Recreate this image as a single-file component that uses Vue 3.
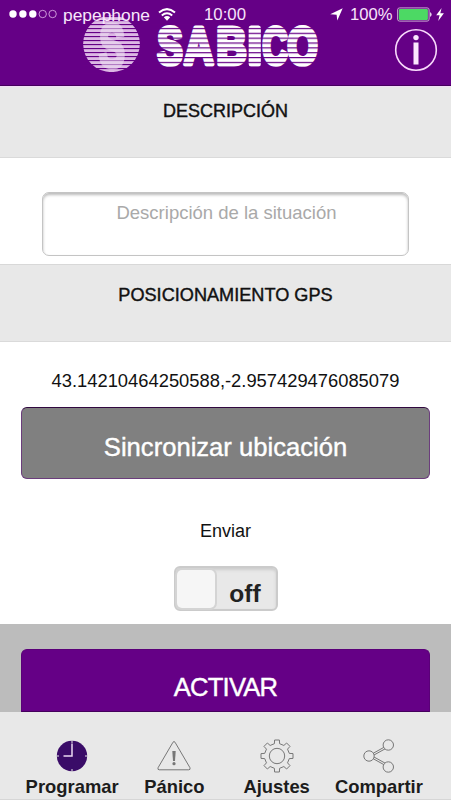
<template>
  <div class="screen">
    <header class="header">
      <div class="status">
        <svg class="dots" width="50" height="12" viewBox="0 0 50 12">
          <circle
            v-for="n in 5"
            :key="n"
            :cx="4 + (n - 1) * 9.9"
            cy="6"
            r="3.7"
            :class="n <= signal ? 'dot-full' : 'dot-empty'"
          />
        </svg>
        <span class="carrier">pepephone</span>
        <svg class="wifi" width="18" height="13" viewBox="0 0 18 13">
          <path d="M1 4.5Q9 -2.3 17 4.5M3.8 7.4Q9 3 14.2 7.4" />
          <path class="wifi-base" d="M5.8 9.3Q9 6.8 12.2 9.3L9 12.7Z" />
        </svg>
        <span class="time">10:00</span>
        <svg class="arrow" width="13" height="13" viewBox="0 0 13 13">
          <path d="M12.7 0.3L7.3 12.5L6.6 6.8L0.2 6.3Z" />
        </svg>
        <span class="percent">100%</span>
        <svg class="battery" width="36" height="15" viewBox="0 0 36 15">
          <rect class="battery-frame" x="0.6" y="0.9" width="31.5" height="13.2" rx="2" />
          <rect class="battery-fill" x="1.8" y="2.1" width="29.1" height="10.8" rx="1" />
          <path class="battery-tip" d="M33.2 5Q36 7.5 33.2 10Z" />
        </svg>
        <svg class="bolt" width="8" height="13" viewBox="0 0 8 13">
          <path d="M5.6 0L0.2 7.2H3.6L2.2 13L7.9 5.3H4.3Z" />
        </svg>
      </div>

      <svg class="logo" width="240" height="60" viewBox="0 0 240 60">
        <defs>
          <pattern id="ballLines" y="1" width="10" height="4" patternUnits="userSpaceOnUse">
            <rect width="10" height="1.1" fill="#650086" />
          </pattern>
          <pattern id="wordLines" y="3.2" width="10" height="4.85" patternUnits="userSpaceOnUse">
            <rect width="10" height="1.2" fill="#650086" />
          </pattern>
        </defs>
        <circle class="ball" cx="29.5" cy="28.8" r="28.4" />
        <rect width="60" height="60" fill="url(#ballLines)" />
        <text class="ball-letter" x="17" y="52" textLength="26" lengthAdjust="spacingAndGlyphs">S</text>
        <rect width="60" height="60" fill="url(#ballLines)" opacity="0.4" />
        <text class="word" y="49.2">
          <tspan
            v-for="letter in brand"
            :key="letter.char"
            :x="letter.x"
            :textLength="letter.width"
            lengthAdjust="spacingAndGlyphs"
          >{{ letter.char }}</tspan>
        </text>
        <rect x="70" y="6" width="170" height="48" fill="url(#wordLines)" />
      </svg>

      <svg class="info" width="44" height="44" viewBox="0 0 44 44">
        <circle class="info-ring" cx="22" cy="22" r="20.3" />
        <circle cx="22" cy="9.6" r="2.7" />
        <rect x="19.5" y="14.5" width="5" height="22" />
      </svg>
    </header>

    <h2 class="section description">DESCRIPCIÓN</h2>

    <div class="field">
      <textarea placeholder="Descripción de la situación"></textarea>
    </div>

    <h2 class="section gps">POSICIONAMIENTO GPS</h2>

    <div class="location">
      <p class="coords">{{ coords }}</p>
      <button class="button sync">Sincronizar ubicación</button>
      <p class="send">Enviar</p>
      <button class="toggle" @click="sending = !sending" :class="{ on: sending }">
        <span class="knob"></span>
        <span class="toggle-label">{{ sending ? "on" : "off" }}</span>
      </button>
    </div>

    <div class="activate">
      <button class="button primary">ACTIVAR</button>
    </div>

    <nav class="tabs">
      <a class="tab">
        <svg width="34" height="34" viewBox="0 0 34 34">
          <circle class="clock" cx="17" cy="17" r="15.2" />
          <path class="clock-ticks" d="M17 1.5V4M17 30V32.5M1.5 17H4M30 17H32.5" />
          <path class="clock-hands" d="M17 4.5V17H8.5" />
        </svg>
        <span>Programar</span>
      </a>
      <a class="tab">
        <svg class="line" width="34" height="34" viewBox="0 0 34 34">
          <path d="M16 3.2Q17 1.8 18 3.2L33 28.8Q33.6 30.8 31.8 30.8H2.2Q0.4 30.8 1 28.8Z" />
          <path class="mark" d="M15.3 12H18.7L18 22H16Z" />
          <circle class="mark" cx="17" cy="24.7" r="1.6" />
        </svg>
        <span>Pánico</span>
      </a>
      <a class="tab">
        <svg class="line" width="34" height="34" viewBox="0 0 34 34">
          <path :d="gear" />
          <circle cx="17" cy="17" r="7.7" />
        </svg>
        <span>Ajustes</span>
      </a>
      <a class="tab">
        <svg class="line" width="34" height="34" viewBox="0 0 34 34">
          <path d="M11.2 14.3L23.4 7.5M12 16L24.3 9.2M12 18L24.3 24.8M11.2 19.7L23.4 26.5" />
          <circle cx="7" cy="17" r="5.2" />
          <circle cx="26.3" cy="6" r="5.2" />
          <circle cx="26.3" cy="28" r="5.2" />
        </svg>
        <span>Compartir</span>
      </a>
    </nav>
  </div>
</template>

<script setup>
import { ref } from "vue";

const signal = ref(3);
const coords = ref("43.14210464250588,-2.957429476085079");
const sending = ref(false);

const brand = [
  { char: "S", x: 75.5, width: 25 },
  { char: "A", x: 102, width: 29.5 },
  { char: "B", x: 134.5, width: 30 },
  { char: "I", x: 165.7, width: 14 },
  { char: "C", x: 180.5, width: 25 },
  { char: "O", x: 205.5, width: 30 },
];

// eight square teeth around the centre of a 34px box
const gearPath = () => {
  const points = [];
  for (let i = 0; i < 8; i++) {
    const angle = (i * Math.PI) / 4 - Math.PI / 2;
    const corners = [[12.3, -2.6], [16, -2.4], [16, 2.4], [12.3, 2.6]];
    corners.forEach(([r, t]) => {
      const x = 17 + r * Math.cos(angle) - t * Math.sin(angle);
      const y = 17 + r * Math.sin(angle) + t * Math.cos(angle);
      points.push(`${x.toFixed(2)} ${y.toFixed(2)}`);
    });
  }
  return `M${points.join("L")}Z`;
};

const gear = gearPath();
</script>

<style>
body {
  margin: 0;
}
</style>

<style scoped>
.screen {
  width: 100%;
  height: 800px;
  display: flex;
  flex-direction: column;
  overflow: hidden;
  background: #fff;
  font-family: "Liberation Sans", Arial, sans-serif;
  color: #111;
}

.header {
  position: relative;
  flex: none;
  display: flex;
  align-items: flex-start;
  justify-content: space-between;
  height: 87px;
  box-sizing: border-box;
  padding: 15px 13px 0 82px;
  background: #650086;
  border-bottom: 1px solid #f3dcf7;
  box-shadow: inset 0 -1px #45005c;
}

.status {
  position: absolute;
  top: 5px;
  left: 9px;
  right: 7px;
  height: 20px;
  display: flex;
  align-items: center;
  z-index: 1;
  font-size: 17px;
  line-height: 20px;
  color: #f8e5fb;
  fill: #fff;
}

.dots {
  margin-top: -2px;
}

.dot-empty {
  fill: none;
  stroke: #e6bdec;
  stroke-width: 0.8;
}

.carrier {
  width: 88px;
  margin-left: 4px;
  font-size: 17.4px;
}

.wifi {
  margin: -2px 0 0 7px;
}

.wifi path {
  fill: none;
  stroke: #fff;
  stroke-width: 2;
}

.wifi .wifi-base {
  fill: #fff;
  stroke: none;
}

.time {
  margin-left: 28px;
  font-size: 16.8px;
}

.arrow {
  margin: -2px 0 0 auto;
}

.percent {
  margin-left: 7px;
  width: 43px;
  font-size: 16.6px;
}

.battery {
  margin: -1px 0 0 4px;
}

.battery-frame {
  fill: none;
  stroke: #c9a8d2;
}

.battery-fill {
  fill: #4cd964;
}

.bolt {
  margin: -1px 0 0 3px;
}

.logo {
  overflow: visible;
}

.ball {
  fill: #dcb8e4;
}

.ball-letter {
  font-size: 62px;
  font-weight: bold;
  fill: #e6cfec;
  stroke: #e6cfec;
  stroke-width: 4;
}

.word {
  font-size: 52px;
  font-weight: bold;
  fill: #fff;
  stroke: #fff;
  stroke-width: 5;
  stroke-linejoin: round;
}

.info {
  margin-top: 13px;
  fill: #fbe6fd;
}

.info-ring {
  fill: none;
  stroke: #f8d9fb;
  stroke-width: 1.6;
}

.section {
  flex: none;
  box-sizing: border-box;
  margin: 0;
  background: #e8e8e8;
  border-bottom: 1px solid #dadada;
  font-size: 18px;
  font-weight: normal;
  line-height: 22px;
  text-align: center;
  -webkit-text-stroke: 0.4px #111;
}

.description {
  height: 71px;
  padding-top: 13px;
}

.gps {
  height: 78px;
  padding-top: 19px;
  border-top: 1px solid #d8d8d8;
  font-size: 18.15px;
}

.field {
  flex: none;
  height: 106px;
  box-sizing: border-box;
  padding: 34px 42px 0;
}

.field textarea {
  display: block;
  width: 367px;
  height: 64px;
  box-sizing: border-box;
  padding: 9px 10px 0 12px;
  border: 1.5px solid #c4c4c4;
  border-radius: 7px;
  box-shadow: inset 0 2px 3px #bbb;
  background: #fff;
  font-family: inherit;
  font-size: 18.5px;
  line-height: 22px;
  text-align: center;
  resize: none;
  outline: none;
  overflow: hidden;
}

.field textarea::placeholder {
  color: #a9a9a9;
}

.location {
  flex: none;
  display: flex;
  flex-direction: column;
  align-items: center;
  height: 282px;
  padding: 0 21px;
}

.coords {
  margin: 28px 0 15px;
  font-size: 18.35px;
  line-height: 22px;
}

.button {
  width: 100%;
  box-sizing: border-box;
  border-radius: 6px;
  font-family: inherit;
  font-size: 25.6px;
  line-height: 30px;
  text-align: center;
  color: #fff;
  -webkit-text-stroke: 0.4px #fff;
}

.sync {
  height: 72px;
  padding: 7px 0 0;
  background: #808080;
  border: 1.5px solid #6b3d7c;
  border-top-color: #31083f;
}

.send {
  margin: 41px 0 24px;
  font-size: 18px;
  line-height: 22px;
}

.toggle {
  display: flex;
  align-items: center;
  width: 104px;
  height: 45px;
  box-sizing: border-box;
  padding: 0;
  border: 2px solid #cbcbcb;
  border-radius: 6px;
  background: #e8e8e8;
  box-shadow: inset 0 2px 3px #ccc;
  font-family: inherit;
}

.toggle.on {
  flex-direction: row-reverse;
}

.knob {
  width: 38px;
  height: 38px;
  box-sizing: border-box;
  border-radius: 5px;
  background: #f6f6f6;
  box-shadow: 0 0 0 2px #d4d4d4;
  margin-left: 1px;
}

.toggle-label {
  flex: 1;
  padding-top: 11px;
  font-size: 24.5px;
  font-weight: bold;
  line-height: 28px;
  color: #222;
}

.activate {
  flex: none;
  height: 88px;
  box-sizing: border-box;
  padding: 25px 21px 0;
  background: #bcbcbc;
}

.primary {
  height: 63px;
  padding: 13px 0 0;
  border: 1px solid #5a0078;
  border-bottom-color: #45005c;
  border-radius: 6px 6px 0 0;
  background: #650086;
  letter-spacing: -0.8px;
}

.tabs {
  flex: 1;
  display: grid;
  grid-template-columns: repeat(4, 1fr);
  padding: 27px 21px 0;
  background: #e8e8e8;
  border-bottom: 1px solid #d6d6d6;
}

.tab {
  display: flex;
  flex-direction: column;
  align-items: center;
  font-size: 18.4px;
  font-weight: bold;
  line-height: 22px;
  color: #1c1c1c;
}

.tab span {
  margin-top: 3px;
}

.line {
  fill: #e8e8e8;
  stroke: #777;
  stroke-width: 1;
}

.line .mark {
  fill: #777;
  stroke: none;
}

.clock {
  fill: #3a0c68;
}

.clock-ticks {
  stroke: #e8e8e8;
  stroke-width: 1;
}

.clock-hands {
  fill: none;
  stroke: #ecd9f2;
  stroke-width: 1.5;
}
</style>
